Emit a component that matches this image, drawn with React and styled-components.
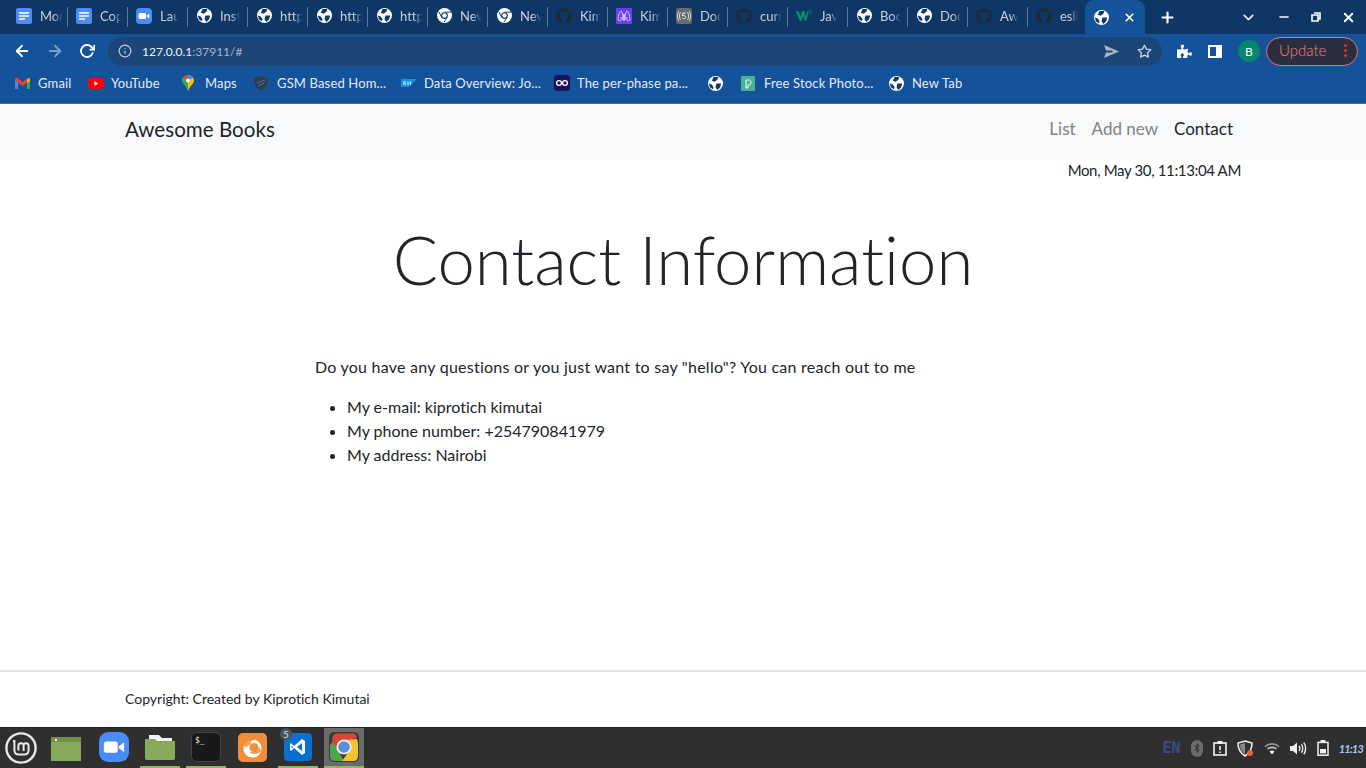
import React from "react";
import styled, { createGlobalStyle } from "styled-components";
import { FaGithub, FaPuzzlePiece, FaBluetoothB } from "react-icons/fa";
import { FiArrowLeft, FiArrowRight, FiRotateCw, FiInfo, FiStar, FiChevronDown, FiX, FiPlus, FiMinus } from "react-icons/fi";

const GlobalStyle = createGlobalStyle`
	html, body { margin: 0; padding: 0; height: 100%; background: #fff; }
	body { font-family: "Lato", "Open Sans", sans-serif; color: #212529; font-variant-ligatures: none; }
	#root { height: 100%; }
	* { box-sizing: border-box; }
`;

// small drawings
const Globe = ({ size = 15 }) => (
	<svg width={size} height={size} viewBox='0 0 16 16'>
		<circle cx='8' cy='8' r='8' fill='#fff' />
		<path d='M6 1 L11 1 L10 4 L7 6 L4 5 Z M9 8 L14 8 L13 12 L10 15 L8 12 Z M1 8 L4 9 L6 12 L5 14 L2 12 Z' fill='#0f3a6b' />
	</svg>
);

const Doc = () => (
	<svg width='16' height='16' viewBox='0 0 16 16'>
		<rect width='16' height='16' rx='2' fill='#4f8df5' />
		<path d='M3 5h10M3 8h10M3 11h6' stroke='#fff' strokeWidth='1.5' />
	</svg>
);

const ZoomIcon = ({ size = 16, radius = 4 }) => (
	<svg width={size} height={size} viewBox='0 0 16 16'>
		<rect width='16' height='16' rx={radius} fill='#4a8cf7' />
		<rect x='2.6' y='5' width='7.4' height='6' rx='1.2' fill='#fff' />
		<path d='M10.6 7.6 L13.4 5.4 V10.6 L10.6 8.6 Z' fill='#fff' />
	</svg>
);

const ChromeWhite = () => (
	<svg width='15' height='15' viewBox='0 0 16 16'>
		<circle cx='8' cy='8' r='8' fill='#fff' />
		<circle cx='8' cy='8' r='3.6' fill='#0e3766' />
		<circle cx='8' cy='8' r='2.4' fill='#fff' />
		<path d='M8 4.4 H15 M5 10 L2 4 M10.8 10 L7.5 15' stroke='#0e3766' strokeWidth='1' />
	</svg>
);

const KimIcon = () => (
	<svg width='16' height='16' viewBox='0 0 16 16'>
		<rect width='16' height='16' fill='#6d3df0' />
		<path d='M2 12 C2 7 4 3 5 3 C6 3 7 8 8 12 C9 8 10 3 11 3 C12 3 14 7 14 12 C12 14 10 12 11 9 M2 12 C4 14 6 12 5 9 M8 12 C6 14 7 7 8 6 C9 7 10 14 8 12' fill='none' stroke='#e6dcff' strokeWidth='0.9' />
	</svg>
);

const FiveIcon = () => (
	<svg width='16' height='16' viewBox='0 0 16 16'>
		<rect width='16' height='16' rx='2' fill='#6b6b6b' />
		<path d='M4.5 4 C3 6.5 3 9.5 4.5 12 M2.8 3 C1 6 1 10 2.8 13 M11.5 4 C13 6.5 13 9.5 11.5 12 M13.2 3 C15 6 15 10 13.2 13' fill='none' stroke='#eee' strokeWidth='0.8' />
		<path d='M9.6 5 H6.9 L6.6 8 C8 7 9.8 7.6 9.6 9.2 C9.4 11 7.4 11 6.4 10.2' fill='none' stroke='#eee' strokeWidth='1' />
	</svg>
);

const W3Icon = () => (
	<svg width='17' height='14' viewBox='0 0 17 14'>
		<path d='M0 2h3l1.6 6L6.4 2h2.4l1.6 6L12 2h1.6l-2.6 10H9L7.6 6.6 6 12H4z' fill='#04936a' />
		<path d='M14 1.4h2.4L15 3c1 0 1.4.6 1.2 1.2-.3.9-1.6.9-2.2.4' fill='none' stroke='#04936a' strokeWidth='0.7' />
	</svg>
);

const GmailIcon = () => (
	<svg width='15' height='12' viewBox='0 0 15 12'>
		<path d='M0 2 V12 H3 V5 Z' fill='#4285f4' />
		<path d='M15 2 V12 H12 V5 Z' fill='#34a853' />
		<path d='M0 1.5 L2 0.5 L7.5 5 L13 0.5 L15 1.5 L15 3 L12 5.5 L7.5 9 L3 5.5 L0 3 Z' fill='#ea4335' />
		<path d='M12 3 L15 1 V4 L12 6 Z' fill='#fbbc04' />
	</svg>
);

const YouTubeIcon = () => (
	<svg width='16' height='11' viewBox='0 0 16 11'>
		<rect width='16' height='11' rx='2.4' fill='#f00' />
		<path d='M6.4 3.2 L10.4 5.5 L6.4 7.8 Z' fill='#fff' />
	</svg>
);

const MapsIcon = () => (
	<svg width='12' height='16' viewBox='0 0 12 16'>
		<path d='M6 0 C9.5 0 12 2.5 12 5.6 C12 9 8 11 6 16 Z' fill='#fbbc04' />
		<path d='M6 0 C2.5 0 0 2.5 0 5.6 C0 9 4 11 6 16 Z' fill='#34a853' />
		<path d='M1.6 1.8 C3 0.4 5 0 6 0 L6 5.6 Z' fill='#ea4335' />
		<path d='M6 0 C8 0 10 .8 11 2.6 L6 5.6 Z' fill='#4285f4' />
		<circle cx='6' cy='5.6' r='2' fill='#fff' />
	</svg>
);

const ShieldDark = () => (
	<svg width='14' height='15' viewBox='0 0 14 15'>
		<path d='M7 0 L14 2 C14 8 12 12 7 15 C2 12 0 8 0 2 Z' fill='#2c3e50' />
		<path d='M3 7 L11 4 M4 10 L10 7' stroke='#5b7188' strokeWidth='1' />
	</svg>
);

const SapIcon = () => (
	<svg width='16' height='8' viewBox='0 0 16 8'>
		<path d='M0 0 H16 L8 8 H0 Z' fill='#1b8fe0' />
		<path d='M2 3 H5 M2 5 H5 M7 2.4 V6 M9.4 2.4 V6' stroke='#fff' strokeWidth='0.9' />
	</svg>
);

const GlassesIcon = () => (
	<svg width='16' height='16' viewBox='0 0 16 16'>
		<rect width='16' height='16' rx='3' fill='#1a1160' />
		<circle cx='5' cy='8' r='2.4' fill='#14114a' stroke='#fff' strokeWidth='1.3' />
		<circle cx='11' cy='8' r='2.4' fill='#14114a' stroke='#fff' strokeWidth='1.3' />
	</svg>
);

const StockIcon = () => (
	<svg width='14' height='15' viewBox='0 0 14 15'>
		<rect width='14' height='15' rx='1' fill='#4caf97' />
		<path d='M5 4 H8 C10.6 4 10.6 9 8 9 H7 V12 H5 Z' fill='none' stroke='#fff' strokeWidth='1' />
	</svg>
);

const SendIcon = () => (
	<svg width='15' height='13' viewBox='0 0 15 13'>
		<path d='M0 0 L15 6.5 L0 13 L2 7.6 H8.5 V5.4 H2 Z' fill='#a9b7c6' />
	</svg>
);

const SidePanelIcon = () => (
	<svg width='14' height='13' viewBox='0 0 14 13'>
		<rect x='1' y='1' width='12' height='11' fill='none' stroke='#fff' strokeWidth='2' />
		<rect x='8' y='1' width='5' height='11' fill='#fff' />
	</svg>
);

const RestoreIcon = () => (
	<svg width='10' height='10' viewBox='0 0 10 10'>
		<path d='M3 1 H9 V7 H7 M1 3 H7 V9 H1 Z' fill='none' stroke='#fff' strokeWidth='1.6' />
	</svg>
);

const MintLogo = () => (
	<svg width='32' height='32' viewBox='0 0 32 32'>
		<circle cx='16' cy='16' r='14.6' fill='none' stroke='#e8e8e8' strokeWidth='2.4' />
		<path d='M8 9 H9.4 V18 C9.4 21 11 22.6 14 22.6 H19 C22 22.6 23.6 21 23.6 18 V14 C23.6 10.4 19 10.4 18.6 13 C18.2 10.4 13.4 10.4 13.4 14 V18.6 M18.6 13 V19' fill='none' stroke='#e8e8e8' strokeWidth='2' />
	</svg>
);

const WindowIcon = () => (
	<svg width='30' height='24' viewBox='0 0 30 24'>
		<rect width='30' height='24' fill='#86aa5a' />
		<rect width='30' height='5' fill='#6f9247' />
		<rect x='4' y='2' width='2' height='2' fill='#fff' />
	</svg>
);

const FolderIcon = () => (
	<svg width='30' height='25' viewBox='0 0 30 25'>
		<path d='M4 0 H14 L17 3 H27 V6 H4 Z' fill='#f2f2f2' />
		<path d='M0 4 H10 L12 6 H30 V23 Q30 25 28 25 H2 Q0 25 0 23 Z' fill='#86aa5a' />
	</svg>
);

const TerminalIcon = () => (
	<svg width='30' height='30' viewBox='0 0 30 30'>
		<rect x='.5' y='.5' width='29' height='29' rx='5' fill='#191919' stroke='#444' />
		<text x='4' y='11' fontFamily='DejaVu Sans Mono, monospace' fontSize='8' fill='#eee'>$_</text>
	</svg>
);

const FirefoxIcon = () => (
	<svg width='29' height='29' viewBox='0 0 30 30'>
		<rect width='30' height='30' rx='5' fill='#f28d3b' />
		<circle cx='15' cy='16' r='9.4' fill='#fff' />
		<circle cx='16.4' cy='15' r='4.6' fill='#f28d3b' />
		<path d='M6 13 C8 7 13 5 19 6 C15 7 13 9 13 11 L8 15 Z M11 18 C14 21 20 20 22 14 L24 19 C21 22 14 24 11 18 Z' fill='#f28d3b' opacity='.85' />
	</svg>
);

const VsCodeIcon = () => (
	<svg width='28' height='28' viewBox='0 0 28 28'>
		<rect width='28' height='28' rx='4' fill='#0a6fd0' />
		<path d='M18 6 L21 8 V20 L18 22 L10 15 L7 18 L6 17 V11 L7 10 L10 13 Z M18 10 L13 14 L18 18 Z M7.6 12.4 V15.6 L9.2 14 Z' fill='#fff' fillRule='evenodd' />
	</svg>
);

const ChromeColor = () => (
	<svg width='30' height='30' viewBox='0 0 30 30'>
		<rect width='30' height='30' rx='5' fill='#3a3a3a' />
		<path d='M1 13 L1 24 Q1 29 6 29 H15 L9.6 19 L5 8 Z' fill='#4ca64c' />
		<path d='M3 10 Q3 1.5 8 1.5 H25 Q27 1.5 28 6 L15 9 L8 16 Z' fill='#dc4437' />
		<path d='M28 7 Q29 10 29 13 V24 Q29 29 24 29 H13 L21 18 L15 8 Z' fill='#f4c430' />
		<circle cx='15' cy='15' r='7.6' fill='#f0f0f0' />
		<circle cx='15' cy='15' r='5.8' fill='#5d8fd8' />
	</svg>
);

const ClipboardIcon = () => (
	<svg width='14' height='16' viewBox='0 0 14 16'>
		<rect x='1' y='3' width='12' height='12' fill='none' stroke='#f2f2f2' strokeWidth='1.6' />
		<rect x='4.5' y='1' width='5' height='3' fill='#f2f2f2' />
		<path d='M7 6 V10 M7 11.4 V13' stroke='#f2f2f2' strokeWidth='1.6' />
	</svg>
);

const ShieldTray = () => (
	<svg width='17' height='17' viewBox='0 0 17 17'>
		<path d='M8 1 L15 3 C15 9 13 13 8 16 C3 13 1 9 1 3 Z' fill='none' stroke='#eee' strokeWidth='1.6' />
		<path d='M8 3 L8 14 C5 12 3 9 3 4.4 Z' fill='#888' />
		<circle cx='13' cy='13' r='3' fill='#e8652c' />
	</svg>
);

const WifiIcon = () => (
	<svg width='16' height='13' viewBox='0 0 16 13'>
		<path d='M1 4.6 C5 1 11 1 15 4.6' fill='none' stroke='#9a9a9a' strokeWidth='1.6' />
		<path d='M3.4 7 C6 4.8 10 4.8 12.6 7' fill='none' stroke='#c8c8c8' strokeWidth='1.6' />
		<path d='M5.6 9.4 C7 8.2 9 8.2 10.4 9.4 L8 12.4 Z' fill='#f2f2f2' />
	</svg>
);

const VolumeIcon = () => (
	<svg width='17' height='15' viewBox='0 0 17 15'>
		<path d='M0 5 H3 L7 1.6 V13.4 L3 10 H0 Z' fill='#eee' />
		<path d='M9 5 C10 6.4 10 8.6 9 10 M11.4 3.4 C13 5.8 13 9.2 11.4 11.6 M13.8 1.6 C16.2 5 16.2 10 13.8 13.4' fill='none' stroke='#eee' strokeWidth='1.4' />
	</svg>
);

const BatteryIcon = () => (
	<svg width='12' height='16' viewBox='0 0 12 16'>
		<rect x='1' y='2.4' width='10' height='12.8' fill='none' stroke='#f2f2f2' strokeWidth='1.5' />
		<rect x='3.6' y='0' width='4.8' height='2.4' fill='#f2f2f2' />
		<rect x='3' y='9' width='6' height='4.4' fill='#f2f2f2' />
	</svg>
);

const tabs = [
	{ label: "Mor", icon: <Doc /> },
	{ label: "Cop", icon: <Doc /> },
	{ label: "Lau", icon: <ZoomIcon /> },
	{ label: "Inst", icon: <Globe /> },
	{ label: "http", icon: <Globe /> },
	{ label: "http", icon: <Globe /> },
	{ label: "http", icon: <Globe /> },
	{ label: "Nev", icon: <ChromeWhite /> },
	{ label: "Nev", icon: <ChromeWhite /> },
	{ label: "Kim", icon: <FaGithub size={16} color='#1f2a36' /> },
	{ label: "Kim", icon: <KimIcon /> },
	{ label: "Doc", icon: <FiveIcon /> },
	{ label: "curr", icon: <FaGithub size={16} color='#1f2a36' /> },
	{ label: "Jav", icon: <W3Icon /> },
	{ label: "Boc", icon: <Globe /> },
	{ label: "Doc", icon: <Globe /> },
	{ label: "Aw", icon: <FaGithub size={16} color='#1f2a36' /> },
	{ label: "esli", icon: <FaGithub size={16} color='#1f2a36' /> },
];

const bookmarks = [
	{ label: "Gmail", icon: <GmailIcon />, width: 73 },
	{ label: "YouTube", icon: <YouTubeIcon />, width: 94 },
	{ label: "Maps", icon: <MapsIcon />, width: 72 },
	{ label: "GSM Based Hom...", icon: <ShieldDark />, width: 147 },
	{ label: "Data Overview: Jo...", icon: <SapIcon />, width: 153 },
	{ label: "The per-phase pa...", icon: <GlassesIcon />, width: 154 },
	{ label: "", icon: <Globe />, width: 33 },
	{ label: "Free Stock Photo...", icon: <StockIcon />, width: 148 },
	{ label: "New Tab", icon: <Globe />, width: 90 },
];

const dockItems = [
	{ icon: <WindowIcon /> },
	{ icon: <ZoomIcon size={30} radius={5} /> },
	{ icon: <FolderIcon />, open: true },
	{ icon: <TerminalIcon />, open: true },
	{ icon: <FirefoxIcon /> },
	{ icon: <VsCodeIcon />, open: true, badge: "5" },
	{ icon: <ChromeColor />, open: true, active: true },
];

const App = () => {
	return (
		<>
			<GlobalStyle />
			<Screen>
				<TabStrip>
					{tabs.map((tab, i) => (
						<Tab key={i}>
							<TabIcon>{tab.icon}</TabIcon>
							<TabLabel>{tab.label}</TabLabel>
						</Tab>
					))}
					<ActiveTab>
						<Globe />
						<FiX size={13} strokeWidth={3} color='#fff' />
					</ActiveTab>
					<NewTab>
						<FiPlus size={17} strokeWidth={3} color='#fff' />
					</NewTab>
					<WindowControls>
						<FiChevronDown size={17} strokeWidth={2.6} color='#dfe6ee' />
						<WindowButtons>
							<FiMinus size={14} strokeWidth={2.4} color='#fff' />
							<RestoreIcon />
							<FiX size={15} strokeWidth={3} color='#fff' />
						</WindowButtons>
					</WindowControls>
				</TabStrip>

				<Toolbar>
					<NavArrows>
						<FiArrowLeft size={18} strokeWidth={2.4} color='#fff' />
						<FiArrowRight size={18} strokeWidth={2.4} color='#7f9fc6' />
						<FiRotateCw size={16} strokeWidth={2.8} color='#fff' />
					</NavArrows>
					<AddressBar>
						<FiInfo size={14} strokeWidth={2} color='#c3cfdc' />
						<AddressText>
							127.0.0.1<AddressPort>:37911/#</AddressPort>
						</AddressText>
						<AddressActions>
							<SendIcon />
							<FiStar size={15} strokeWidth={2.2} color='#c3cfdc' />
						</AddressActions>
					</AddressBar>
					<ToolbarIcons>
						<FaPuzzlePiece size={15} color='#fff' />
						<SidePanelIcon />
						<Avatar>B</Avatar>
					</ToolbarIcons>
					<UpdatePill>
						Update
						<Dots>
							<i />
							<i />
							<i />
						</Dots>
					</UpdatePill>
				</Toolbar>

				<BookmarkBar>
					{bookmarks.map((mark, i) => (
						<Bookmark key={i} $width={mark.width}>
							<BookmarkIcon>{mark.icon}</BookmarkIcon>
							{mark.label && <span>{mark.label}</span>}
						</Bookmark>
					))}
				</BookmarkBar>

				<Page>
					<NavBar>
						<Brand>Awesome Books</Brand>
						<NavLinks>
							<NavLink>List</NavLink>
							<NavLink>Add new</NavLink>
							<NavLink $active>Contact</NavLink>
						</NavLinks>
					</NavBar>
					<DateLine>Mon, May 30, 11:13:04 AM</DateLine>
					<Title>Contact Information</Title>
					<ContactBox>
						<Intro>
							Do you have any questions or you just want to say "hello"? You can
							reach out to me
						</Intro>
						<ContactList>
							<li>My e-mail: kiprotich kimutai</li>
							<li>My phone number: +254790841979</li>
							<li>My address: Nairobi</li>
						</ContactList>
					</ContactBox>
					<Footer>Copyright: Created by Kiprotich Kimutai</Footer>
				</Page>

				<Taskbar>
					<MintButton>
						<MintLogo />
					</MintButton>
					<Dock>
						{dockItems.map((item, i) => (
							<DockItem key={i} $open={item.open} $active={item.active}>
								{item.icon}
								{item.badge && <DockBadge>{item.badge}</DockBadge>}
							</DockItem>
						))}
					</Dock>
					<Tray>
						<TrayLang>EN</TrayLang>
						<BluetoothPill>
							<FaBluetoothB size={10} color='#2f2f2f' />
						</BluetoothPill>
						<ClipboardIcon />
						<ShieldTray />
						<WifiIcon />
						<VolumeIcon />
						<BatteryIcon />
						<Clock>11:13</Clock>
					</Tray>
				</Taskbar>
			</Screen>
		</>
	);
};

export default App;

const Screen = styled.div`
	height: 768px;
	width: 1366px;
	display: flex;
	flex-direction: column;
	overflow: hidden;
`;

const TabStrip = styled.div`
	height: 34px;
	flex: none;
	background: #0e3766;
	display: flex;
	align-items: center;
	padding-left: 8px;
`;

const Tab = styled.div`
	width: 60px;
	height: 20px;
	flex: none;
	display: flex;
	align-items: center;
	gap: 8px;
	padding: 0 0 3px 8px;
	border-right: 1px solid #5a7897;
`;

const TabIcon = styled.span`
	width: 16px;
	flex: none;
	display: flex;
	justify-content: center;
`;

/* the browser fades long tab titles out on the right */
const TabLabel = styled.span`
	font-size: 13px;
	color: #c4d0dd;
	white-space: nowrap;
	flex: none;
	mask-image: linear-gradient(to right, #000 55%, transparent 95%);
`;

const ActiveTab = styled.div`
	width: 60px;
	height: 34px;
	flex: none;
	margin-left: -3px;
	background: #14539a;
	border-radius: 9px 9px 0 0;
	display: flex;
	align-items: center;
	justify-content: space-between;
	padding: 0 9px;
`;

const NewTab = styled.div`
	width: 44px;
	flex: none;
	display: flex;
	justify-content: center;
`;

const WindowControls = styled.div`
	margin-left: auto;
	display: flex;
	align-items: center;
	gap: 20px;
	padding-right: 10px;
`;

const WindowButtons = styled.div`
	display: flex;
	align-items: center;
	gap: 20px;
`;

const Toolbar = styled.div`
	height: 34px;
	flex: none;
	background: #14539a;
	display: flex;
	align-items: center;
	padding: 0 8px 0 13px;
`;

const NavArrows = styled.div`
	width: 95px;
	flex: none;
	display: flex;
	align-items: center;
	gap: 15px;
`;

const AddressBar = styled.div`
	width: 1054px;
	height: 29px;
	flex: none;
	background: #1c4678;
	border-radius: 15px;
	display: flex;
	align-items: center;
	padding: 0 10px;
`;

const AddressText = styled.span`
	margin-left: 10px;
	font-size: 12px;
	color: #f1f5f9;
`;

const AddressPort = styled.span`
	color: #a3b5c9;
`;

const AddressActions = styled.div`
	margin-left: auto;
	display: flex;
	align-items: center;
	gap: 18px;
`;

const ToolbarIcons = styled.div`
	display: flex;
	align-items: center;
	gap: 16px;
	margin-left: 15px;
	width: 89px;
	flex: none;
`;

const Avatar = styled.span`
	width: 22px;
	height: 22px;
	flex: none;
	border-radius: 50%;
	background: #05876f;
	color: #fff;
	font-size: 12px;
	display: flex;
	align-items: center;
	justify-content: center;
`;

const UpdatePill = styled.div`
	width: 92px;
	height: 29px;
	flex: none;
	border: 1px solid #e8766b;
	border-radius: 15px;
	background: #2b2e3e;
	color: #f08478;
	font-size: 15px;
	font-weight: 300;
	display: flex;
	align-items: center;
	justify-content: space-between;
	padding: 0 10px 2px 12px;
`;

const Dots = styled.span`
	display: flex;
	flex-direction: column;
	gap: 2px;

	i {
		display: block;
		width: 3px;
		height: 3px;
		border-radius: 50%;
		background: #d9352a;
	}
`;

const BookmarkBar = styled.div`
	height: 36px;
	flex: none;
	background: #14539a;
	border-bottom: 1px solid #3c6ea8;
	display: flex;
	align-items: center;
	padding: 0 0 5px 15px;
`;

const Bookmark = styled.div`
	width: ${(props) => props.$width}px;
	flex: none;
	display: flex;
	align-items: center;
	font-size: 13px;
	letter-spacing: 0.15px;
	color: #e3eaf2;
	white-space: nowrap;
`;

const BookmarkIcon = styled.span`
	width: 23px;
	flex: none;
	display: flex;
`;

const Page = styled.main`
	flex: 1;
	min-height: 0;
	background: #fff;
	display: flex;
	flex-direction: column;
`;

const NavBar = styled.nav`
	height: 56px;
	flex: none;
	background: #f8f9fa;
	display: flex;
	align-items: center;
	justify-content: space-between;
	padding: 0 133px 7px 125px;
`;

const Brand = styled.div`
	font-size: 20.6px;
	color: #212529;
`;

const NavLinks = styled.div`
	display: flex;
	gap: 16px;
`;

const NavLink = styled.a`
	font-size: 17px;
	color: ${(props) => (props.$active ? "#212529" : "#808285")};
`;

const DateLine = styled.div`
	height: 20px;
	line-height: 20px;
	text-align: right;
	padding-right: 125px;
	font-size: 15px;
	letter-spacing: -0.35px;
`;

const Title = styled.h1`
	margin: 34px 0 0;
	height: 90px;
	line-height: 90px;
	text-align: center;
	font-size: 67px;
	font-weight: 300;
`;

const ContactBox = styled.section`
	width: 736px;
	margin: 51px auto 0;
`;

const Intro = styled.p`
	margin: 0 0 16px;
	line-height: 24px;
	font-size: 16px;
	letter-spacing: 0.24px;
`;

const ContactList = styled.ul`
	margin: 0;
	padding-left: 32px;
	line-height: 24px;
	font-size: 16px;
`;

const Footer = styled.footer`
	margin-top: auto;
	height: 57px;
	flex: none;
	border-top: 2px solid #dee2e6;
	display: flex;
	align-items: center;
	padding: 0 0 2px 125px;
	font-size: 14px;
`;

const Taskbar = styled.div`
	height: 41px;
	flex: none;
	background: #2f2f2f;
	border-top: 1px solid #222;
	display: flex;
	align-items: stretch;
`;

const MintButton = styled.div`
	width: 48px;
	flex: none;
	display: flex;
	align-items: center;
	padding-left: 5px;
`;

const Dock = styled.div`
	display: flex;
	gap: 6px;
`;

const DockItem = styled.div`
	position: relative;
	width: 40px;
	flex: none;
	display: flex;
	align-items: center;
	justify-content: center;
	background: ${(props) => (props.$active ? "#6b6b6b" : "transparent")};
	border-bottom: 2px solid ${(props) => (props.$open ? "#92b56a" : "transparent")};

	/* the first launcher icon sits a little further left than its slot */
	&:first-child {
		padding: 3px 4px 0 0;
	}
`;

const DockBadge = styled.span`
	position: absolute;
	left: 2px;
	top: 0;
	width: 12px;
	height: 12px;
	border-radius: 50%;
	background: #4b535b;
	color: #ddd;
	font-size: 10px;
	line-height: 12px;
	text-align: center;
`;

const Tray = styled.div`
	margin-left: auto;
	display: flex;
	align-items: center;
	padding-right: 3px;
	gap: 10px;
`;

const TrayLang = styled.span`
	font-family: "DejaVu Sans Mono", monospace;
	font-weight: 700;
	font-size: 15px;
	color: #3a4a8c;
`;

const BluetoothPill = styled.span`
	width: 12px;
	height: 17px;
	border-radius: 6px;
	background: #6b6b6b;
	display: flex;
	align-items: center;
	justify-content: center;
`;

const Clock = styled.span`
	font-size: 11px;
	font-style: italic;
	font-weight: 700;
	letter-spacing: -0.8px;
	color: #a8c8f0;
`;
